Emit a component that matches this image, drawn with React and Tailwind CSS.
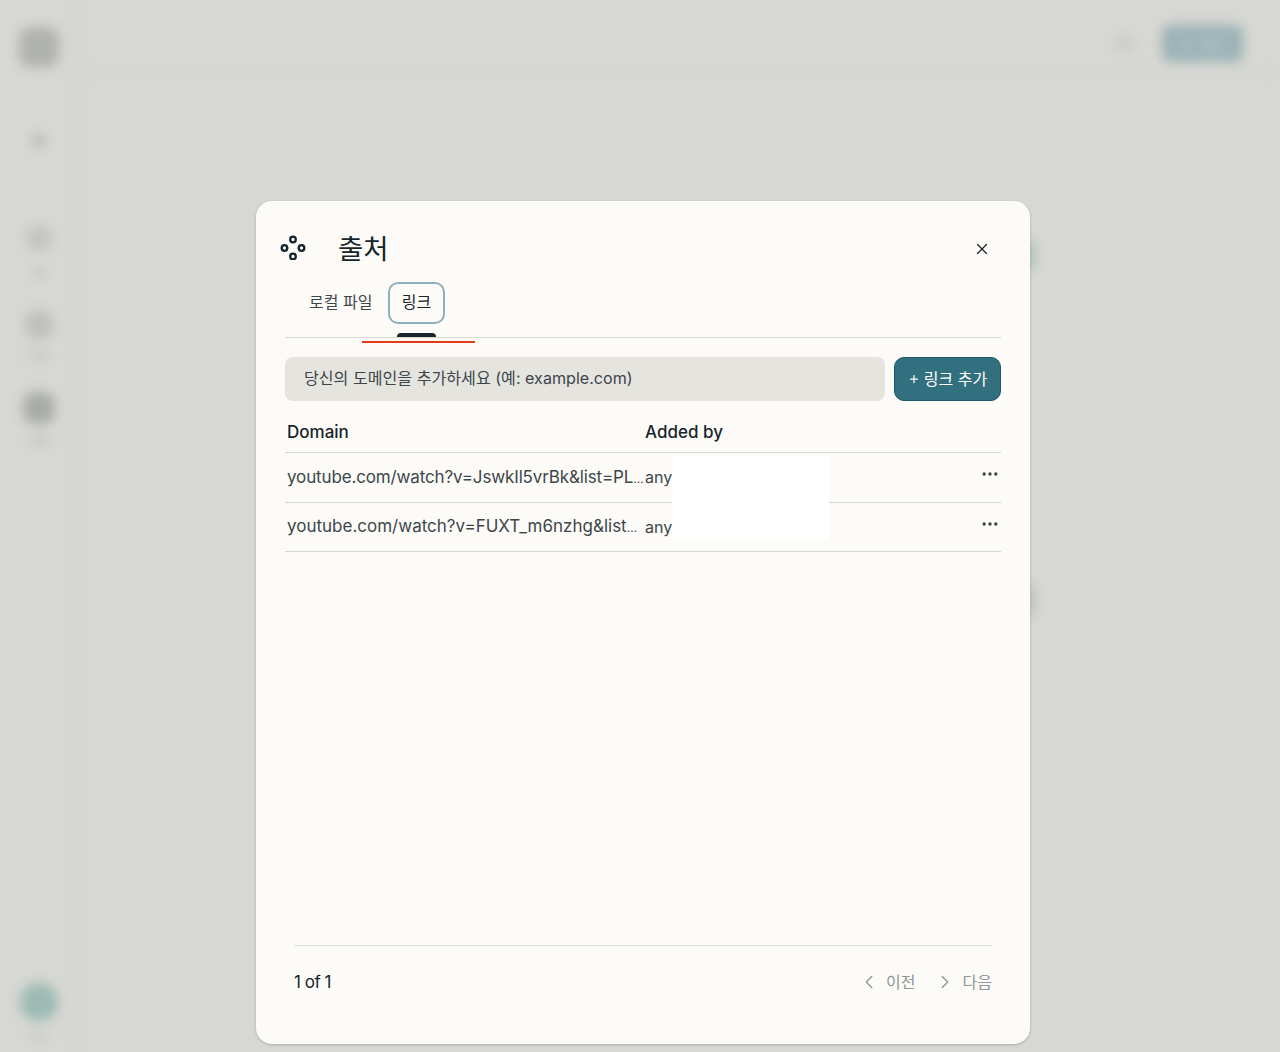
import { ChevronLeft, ChevronRight, Ellipsis, Plus, X } from 'lucide-react'

const font = "font-['Inter','Noto_Sans_CJK_KR',sans-serif]"

const rows = [
    { url: 'youtube.com/watch?v=JswkIl5vrBk&list=PL', spacing: 'tracking-[-0.14px]' },
    { url: 'youtube.com/watch?v=FUXT_m6nzhg&list', spacing: 'tracking-normal' },
]

function SourceIcon() {
    return (
        <svg width="26" height="26" viewBox="0 0 26 26" fill="none" stroke="#17242b" strokeWidth="2.3">
            <circle cx="13" cy="5.5" r="2.8" />
            <circle cx="4.5" cy="14" r="2.8" />
            <circle cx="21.5" cy="14" r="2.8" />
            <circle cx="13" cy="22.5" r="2.8" />
        </svg>
    )
}

function BlurredPage() {
    return (
        <div className="flex h-full w-full blur-[6px]">
            {/* Sidebar */}
            <div className="flex w-[78px] shrink-0 flex-col items-center border-r border-[#cfd0cb] pt-[27px] pb-[12px]">
                <div className="h-[40px] w-[40px] rounded-xl bg-[#b0b2ae]" />
                <div className="mt-[68px] h-[12px] w-[12px] rounded-sm bg-[#b5b7b3]" />
                <div className="mt-[78px] h-[26px] w-[26px] rounded-full bg-[#c3c4c0]" />
                <div className="mt-[17px] h-[9px] w-[10px] rounded-sm bg-[#c0c1bd]" />
                <div className="mt-[33px] h-[30px] w-[30px] rounded-full bg-[#bfc0bc]" />
                <div className="mt-[12px] h-[8px] w-[20px] rounded-sm bg-[#c6c7c3]" />
                <div className="mt-[32px] h-[32px] w-[32px] rounded-xl bg-[#a8aba7]" />
                <div className="mt-[12px] h-[8px] w-[20px] rounded-sm bg-[#c3c4c0]" />
                <div className="mt-auto h-[38px] w-[38px] rounded-full bg-[#9cb9b3]" />
                <div className="mt-[11px] h-[8px] w-[18px] rounded-sm bg-[#c9cac6]" />
            </div>
            {/* Main area */}
            <div className="flex-1">
                <div className="flex h-[72px] items-start justify-end gap-[28px] border-b border-[#d0d1cc] pt-[25px] pr-[37px]">
                    <div className="mt-[11px] h-[14px] w-[18px] rounded-full bg-[#c9cac6]" />
                    <div className="flex h-[37px] w-[81px] items-center justify-center gap-2 rounded-lg bg-[#9bb2b6]">
                        <div className="h-[10px] w-[10px] rounded-sm bg-[#adbfc0]" />
                        <div className="h-[10px] w-[26px] rounded-sm bg-[#adbfc0]" />
                    </div>
                </div>
                <div className="flex flex-col items-end pr-[246px]">
                    <div className="mt-[168px] h-[30px] w-[10px] rounded-r bg-[#a9bcb8]" />
                    <div className="mt-[315px] h-[30px] w-[10px] rounded-r bg-[#b5bfbc]" />
                </div>
            </div>
        </div>
    )
}

function LinkRow({ url, spacing }) {
    return (
        <div className="flex h-[49.5px] items-center border-b border-[#d6d6d0]">
            <div className={`w-[360px] whitespace-nowrap pl-[2px] text-[17px] text-[#3c464b] ${spacing}`}>
                {url}
                <span className="text-[12px]">…</span>
            </div>
            <div className="flex-1 text-[16px] text-[#3c464b]">any</div>
            <button className="mb-[6px] mr-[1px] text-[#39434a]">
                <Ellipsis className="h-[20px] w-[20px]" strokeWidth={2} />
            </button>
        </div>
    )
}

export default function App() {
    return (
        <div className={`relative h-screen w-full overflow-hidden bg-[#d7d8d3] ${font}`}>
            <BlurredPage />

            {/* Modal */}
            <div className="absolute top-[201px] left-[256px] flex h-[843px] w-[774px] flex-col rounded-[16px] bg-[#fcfbf7] pr-[29px] pl-[29px] shadow-[0_1px_3px_rgba(0,0,0,0.2)]">
                <div className="flex h-[81px] items-end">
                    <div className="mb-[22px] -ml-[5px] flex w-[58px] shrink-0">
                        <SourceIcon />
                    </div>
                    <h2 className="mb-[13px] flex-1 text-[27.5px] font-normal leading-[40px] text-[#17242b]">출처</h2>
                    <button className="mb-[24px] mr-[10px] text-[#17242b]">
                        <X className="h-[18px] w-[18px]" strokeWidth={1.75} />
                    </button>
                </div>

                {/* Tabs */}
                <div className="flex h-[56px] items-start border-b border-[#d9d9d3] pl-[24px]">
                    <button className="flex h-[42px] items-center pr-[16px] pb-[2px] text-[16px] text-[#3c464b]">로컬 파일</button>
                    <div className="relative h-[55px]">
                        <button className="h-[42px] w-[57px] rounded-[10px] border-2 border-[#8fb0bb] pr-[1px] pb-[2px] text-[16px] text-[#17242b]">링크</button>
                        <div className="absolute bottom-0 left-[9px] h-[4px] w-[39px] rounded-t-[4px] bg-[#17242b]" />
                    </div>
                </div>

                {/* Add link */}
                <div className="mt-[19px] flex gap-[9px]">
                    <div className="flex h-[44px] flex-1 items-center rounded-[8px] bg-[#e5e4df] pb-[1px] pl-[19px] text-[16.1px] text-[#3c464b]">
                        당신의 도메인을 추가하세요 (예: example.com)
                    </div>
                    <button className="flex h-[44px] w-[107px] items-center justify-center gap-[1px] rounded-[10px] border border-[#1f5564] bg-[#33707f] pb-[1px] text-[16px] text-white">
                        <Plus className="h-[12px] w-[12px]" strokeWidth={2.5} />
                        <span className="ml-[3px]">링크 추가</span>
                    </button>
                </div>

                {/* Table */}
                <div className="flex flex-1 flex-col">
                    <div className="flex h-[52px] items-center border-b border-[#d6d6d0] pt-[12px] text-[17px] font-medium text-[#17242b]">
                        <div className="w-[360px] pl-[2px]">Domain</div>
                        <div>Added by</div>
                    </div>
                    {rows.map((row) => (
                        <LinkRow key={row.url} url={row.url} spacing={row.spacing} />
                    ))}
                </div>

                {/* Pagination */}
                <div className="mx-[9px] flex h-[99px] items-start justify-between border-t border-[#deded8] pt-[25px]">
                    <span className="text-[17px] leading-[22px] tracking-[-0.5px] text-[#17242b]">1 of 1</span>
                    <div className="flex items-center text-[16px] leading-[22px] text-[#8f9699]">
                        <ChevronLeft className="h-[22px] w-[22px]" strokeWidth={1.5} />
                        <span className="ml-[6px]">이전</span>
                        <ChevronRight className="ml-[18px] h-[22px] w-[22px]" strokeWidth={1.5} />
                        <span className="ml-[7px]">다음</span>
                    </div>
                </div>
            </div>

            {/* Redaction and annotation marks on the screenshot */}
            <div className="absolute top-[456px] left-[672px] h-[84px] w-[157px] bg-white" />
            <div className="absolute top-[341px] left-[362px] h-[2px] w-[113px] bg-[#e5391c]" />
        </div>
    )
}
